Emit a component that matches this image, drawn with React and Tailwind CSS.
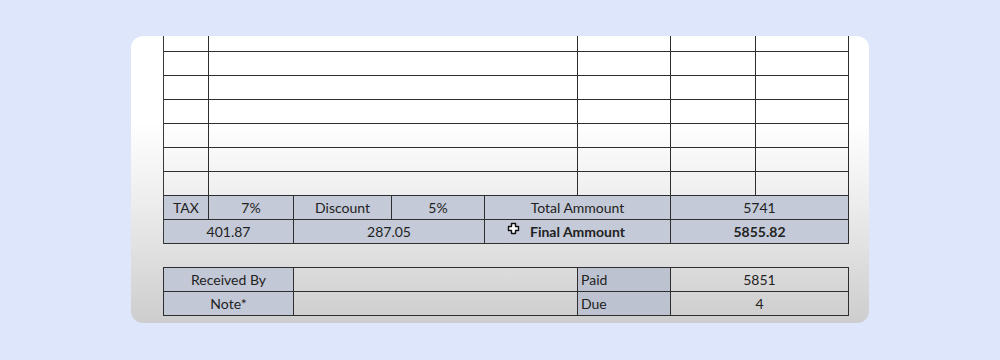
function Cell({ className = "", children }) {
  return (
    <div className={`flex items-center justify-center border-r border-b border-[#2e2e2e] ${className}`}>
      {children}
    </div>
  );
}

function CrossCursor() {
  return (
    <svg width="13" height="13" viewBox="0 0 13 13" className="absolute left-[22px] top-[2px]">
      <path
        d="M4.5 1.5h4v3h3v4h-3v3h-4v-3h-3v-4h3z"
        fill="#fff"
        stroke="#111"
        strokeWidth="1.4"
        strokeLinejoin="round"
      />
    </svg>
  );
}

export default function App() {
  const lineRows = [0, 1, 2, 3, 4, 5];
  const cols = "grid-cols-[45px_369px_93px_85px_93px]";

  return (
    <div className="min-h-[360px] bg-[#dde6fb] pt-[36px] font-['Lato','Open_Sans',sans-serif] text-[14px] text-[#222]">
      <div className="ml-[131px] h-[287px] w-[738px] overflow-hidden rounded-[12px] bg-[linear-gradient(to_bottom,#ffffff_0%,#ffffff_30%,#ededed_58%,#cdcdcd_100%)] pl-[32px] pr-[20px]">
        <div className="w-[686px] border-l border-[#3a3a3a]">
          <div className={`grid ${cols} h-[16px]`}>
            {[0, 1, 2, 3, 4].map((c) => (
              <Cell key={c} />
            ))}
          </div>
          {lineRows.map((r) => (
            <div key={r} className={`grid ${cols} h-[24px]`}>
              {[0, 1, 2, 3, 4].map((c) => (
                <Cell key={c} />
              ))}
            </div>
          ))}

          <div className="grid h-[24px] grid-cols-[45px_85px_98px_93px_186px_178px] bg-[#c4cad8]">
            <Cell>TAX</Cell>
            <Cell>7%</Cell>
            <Cell>Discount</Cell>
            <Cell>5%</Cell>
            <Cell>Total Ammount</Cell>
            <Cell>5741</Cell>
          </div>
          <div className="grid h-[24px] grid-cols-[130px_191px_186px_178px] bg-[#c4cad8]">
            <Cell>401.87</Cell>
            <Cell>287.05</Cell>
            <Cell className="relative font-bold">
              <CrossCursor />
              Final Ammount
            </Cell>
            <Cell className="font-bold">5855.82</Cell>
          </div>
        </div>

        <div className="mt-[23px] w-[686px] border-t border-l border-[#2e2e2e]">
          <div className="grid h-[24px] grid-cols-[130px_284px_93px_178px]">
            <Cell className="bg-[#c2c8d6]">Received By</Cell>
            <Cell />
            <Cell className="justify-start bg-[#bcc2cf] pl-[3px]">Paid</Cell>
            <Cell>5851</Cell>
          </div>
          <div className="grid h-[24px] grid-cols-[130px_284px_93px_178px]">
            <Cell className="bg-[#c2c8d6]">Note*</Cell>
            <Cell />
            <Cell className="justify-start bg-[#bcc2cf] pl-[3px]">Due</Cell>
            <Cell>4</Cell>
          </div>
        </div>
      </div>
    </div>
  );
}
